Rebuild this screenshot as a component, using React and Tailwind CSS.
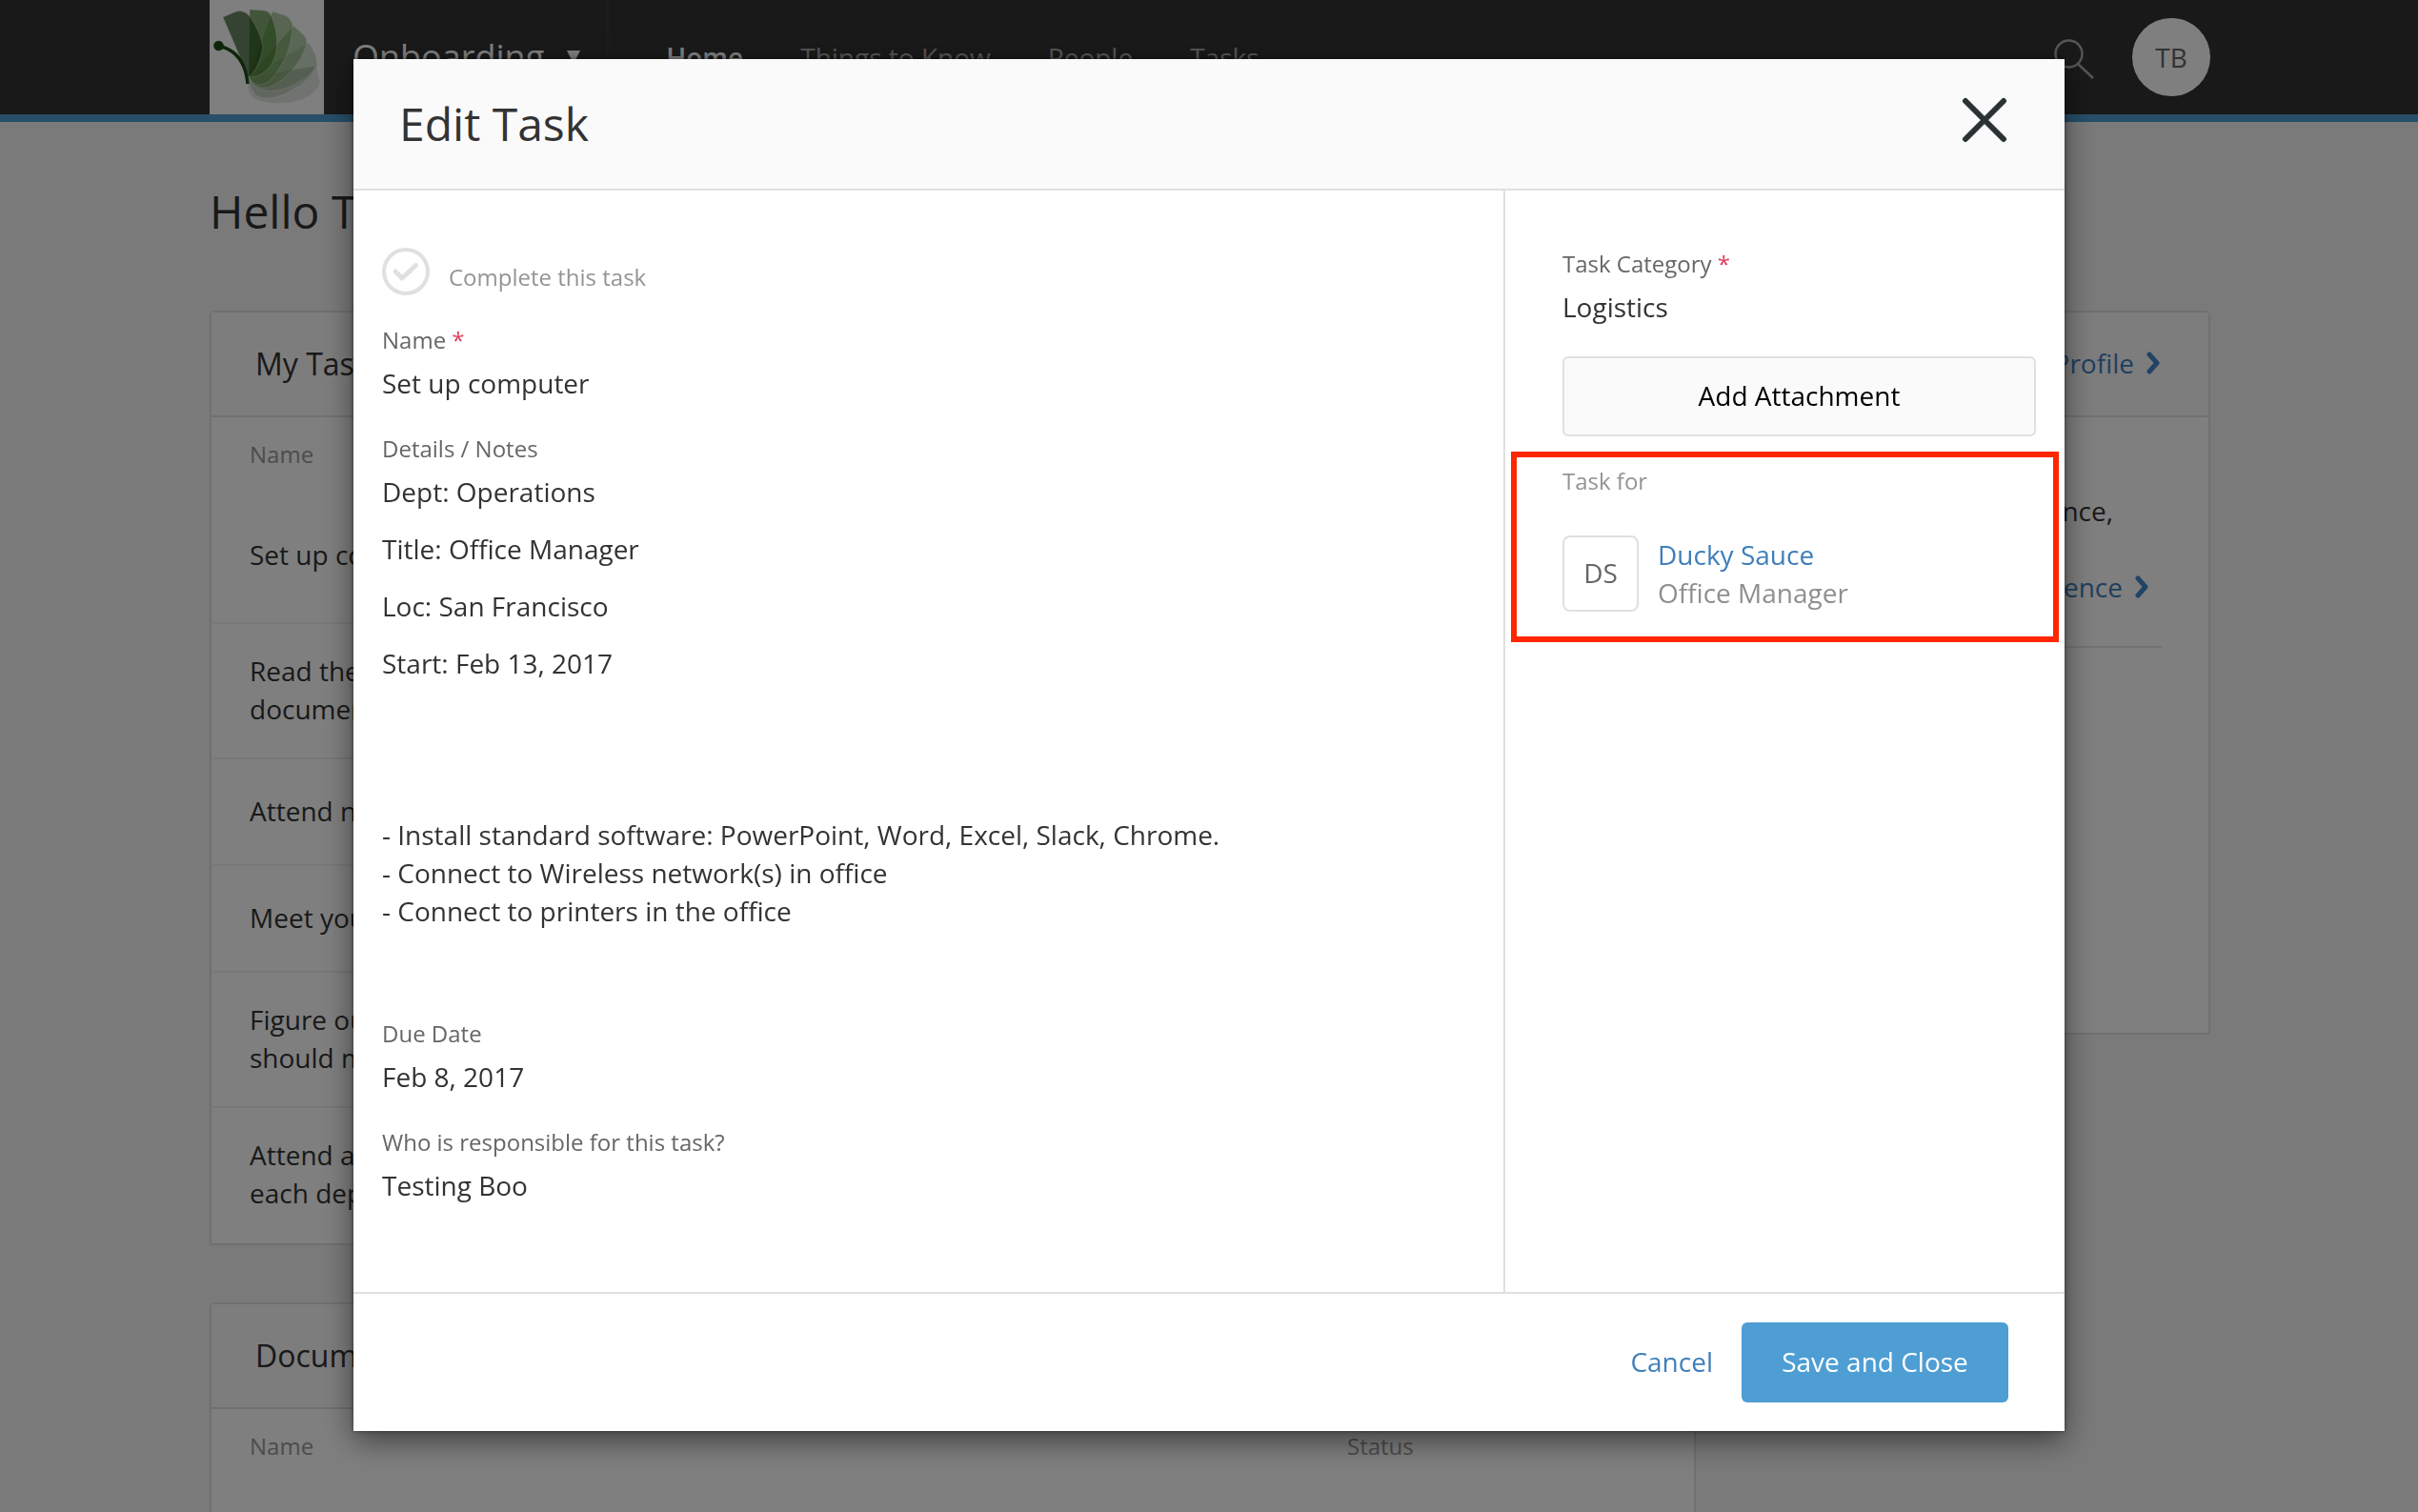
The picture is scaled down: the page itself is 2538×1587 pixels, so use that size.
import React, { useState } from "react";

const tasks = [
  { lines: ["Set up computer"], height: "h-[142px]" },
  { lines: ["Read the onboarding", "documents"], height: "h-[142px]" },
  { lines: ["Attend new hire orientation"], height: "h-28" },
  { lines: ["Meet your manager"], height: "h-28" },
  { lines: ["Figure out who you", "should meet with"], height: "h-[142px]" },
  { lines: ["Attend a meeting with", "each department"], height: "h-[142px]" },
];

const navLinks = ["Things to Know", "People", "Tasks"];

function Logo() {
  return (
    <svg viewBox="0 0 120 120" className="h-30 w-30 shrink-0 bg-white">
      <g stroke="#ffffff" strokeOpacity="0.35" strokeWidth="1">
        <path d="M41 81 Q38 97 46 103 Q66 113 96 105 Q114 97 116 86 L112 69 Z" fill="#b9c4b7" fillOpacity="0.4" />
        <path d="M41 81 L112 69 Q106 86 78 99 Q60 106 50 101 Q42 95 41 81 Z" fill="#93ad8b" fillOpacity="0.4" />
        <path d="M41 81 L104 45 Q112 55 113 68 Q105 84 76 94 Q48 100 41 81 Z" fill="#86a87a" fillOpacity="0.4" />
        <path d="M41 81 L88 27 L97 35 Q102 39 102 46 Q92 78 62 92 Q46 94 41 81 Z" fill="#6f9d5c" fillOpacity="0.5" />
        <path d="M41 81 L66 12 L81 17 Q87 22 87 27 Q86 60 64 84 Q50 96 41 81 Z" fill="#5f9648" fillOpacity="0.5" />
        <path d="M41 81 L42 10 L57 11 Q62 11 65 17 Q76 46 66 66 Q56 82 41 81 Z" fill="#417c28" fillOpacity="0.65" />
        <path d="M41 81 L14 18 L28 12 Q36 10 42 17 Q54 34 56 50 Q52 72 41 81 Z" fill="#1c4a12" fillOpacity="0.65" />
      </g>
      <circle cx="9.500" cy="48" r="5.300" fill="#204d14" />
      <path d="M9 48 Q37 54 40 88" fill="none" stroke="#204d14" strokeWidth="3.500" />
    </svg>
  );
}

function Chevron() {
  return (
    <svg viewBox="0 0 16 24" className="h-6 w-4" fill="none" stroke="#4289c7" strokeWidth="5" strokeLinecap="round" strokeLinejoin="round">
      <path d="M4 3 L12 12 L4 21" />
    </svg>
  );
}

function TopBar() {
  return (
    <header className="border-b-8 border-[#4e9ed4] bg-[#333] pl-0.5">
      <div className="mx-auto flex h-30 max-w-[2100px] items-center">
        <Logo />
        <button className="flex h-full items-center gap-6 border-x-2 border-[#3a3a3a] px-7 text-4xl text-white">
          Onboarding
          <svg viewBox="0 0 14 14" className="h-3.5 w-3.5" fill="#ffffff">
            <path d="M0 0 H14 L7 14 Z" />
          </svg>
        </button>
        <nav className="ml-15 flex gap-15">
          <a href="#" className="font-semibold text-white">Home</a>
          {navLinks.map((label) => (
            <a key={label} href="#" className="text-[#aaa]">{label}</a>
          ))}
        </nav>
        <button aria-label="Search" className="mt-1 ml-auto">
          <svg viewBox="0 0 42 42" className="h-[42px] w-[42px]" fill="none" stroke="#aaaaaa" strokeWidth="2.500">
            <circle cx="15.500" cy="15.500" r="14" />
            <path d="M25 26 L41 41" />
          </svg>
        </button>
        <button className="ml-10 h-[82px] w-[82px] rounded-full bg-white text-[#666]">TB</button>
      </div>
    </header>
  );
}

function Card({ title, children, action }) {
  return (
    <section className="rounded-t-md border-2 border-[#e0e0e0] bg-white">
      <div className="flex h-[110px] items-center justify-between border-b-2 border-[#e0e0e0] bg-[#fafafa] pr-12.5 pl-[46px]">
        <h2 className="text-[32px] font-medium">{title}</h2>
        {action}
      </div>
      {children}
    </section>
  );
}

function TableHead() {
  return (
    <thead>
      <tr className="h-[74px] text-left text-2xl/[34px] text-[#999]">
        <th className="pt-1 pl-[38px] font-medium">Name</th>
        <th className="w-[362px] pt-1 font-medium">Status</th>
      </tr>
    </thead>
  );
}

function Dashboard() {
  return (
    <main className="pl-0.5">
      <div className="mx-auto max-w-[2100px]">
        <h1 className="pt-15 text-5xl/[68px]">Hello Testing</h1>
        <div className="mt-[70px] flex items-start gap-10">
          <div className="flex flex-1 flex-col gap-15">
            <Card title="My Tasks">
              <div className="px-0.5">
                <table className="w-full">
                  <TableHead />
                  <tbody className="font-medium">
                    {tasks.map((task) => (
                      <tr key={task.lines[0]} className={`${task.height} border-b-2 border-[#eee] last:border-transparent`}>
                        <td className="pb-0.5 pl-[38px]">
                          {task.lines.map((line) => (
                            <div key={line}>{line}</div>
                          ))}
                        </td>
                        <td />
                      </tr>
                    ))}
                  </tbody>
                </table>
              </div>
            </Card>
            <Card title="Documents">
              <div className="px-0.5">
                <table className="w-full">
                  <TableHead />
                  <tbody>
                    <tr className="h-60">
                      <td className="pl-[38px]">Employee Handbook</td>
                      <td />
                    </tr>
                  </tbody>
                </table>
              </div>
            </Card>
          </div>
          <aside className="w-[500px]">
            <Card
              title="About"
              action={
                <a href="#" className="flex items-center gap-3 pb-0.5 text-[#3f7fba]">
                  Profile
                  <Chevron />
                </a>
              }
            >
              <div className="h-[646px] px-12 pt-[78px]">
                <p className="pr-13 text-right">Experience,</p>
                <div className="flex justify-end border-b-2 border-[#e6e6e6] pt-10 pr-3.5 pb-[42px]">
                  <a href="#" className="flex items-center gap-3 text-[#3f7fba]">
                    Experience
                    <Chevron />
                  </a>
                </div>
              </div>
            </Card>
          </aside>
        </div>
      </div>
    </main>
  );
}

function Field({ label, required, children }) {
  return (
    <div className="mb-8">
      <div className="mb-2 text-2xl/[34px] text-[#666]">
        {label} {required && <span className="text-[#e0395a]">*</span>}
      </div>
      {children}
    </div>
  );
}

function EditTask({ onClose }) {
  const [done, setDone] = useState(false);

  return (
    <div role="dialog" aria-labelledby="edit-task" className="w-full max-w-[1796px] bg-white shadow-[0_10px_30px_rgba(0,0,0,0.5),0_0_4px_rgba(0,0,0,0.5)]">
      <div className="flex h-[138px] items-center justify-between border-b-2 border-[#e0e0e0] bg-[#fafafa] pr-15 pl-12">
        <h2 id="edit-task" className="text-5xl">Edit Task</h2>
        <button aria-label="Close" onClick={onClose} className="mb-2">
          <svg viewBox="0 0 48 48" className="h-12 w-12" fill="none" stroke="#2b3233" strokeWidth="6" strokeLinecap="round">
            <path d="M4 4 L44 44 M44 4 L4 44" />
          </svg>
        </button>
      </div>

      <div className="flex min-h-[1156px]">
        <div className="flex-1 border-r-2 border-[#e0e0e0] px-7.5 pt-15">
          <label className="mb-7.5 flex h-[50px] items-center gap-5 text-2xl/[34px] font-medium text-[#949494]">
            <input type="checkbox" className="sr-only" checked={done} onChange={() => setDone(!done)} />
            <svg viewBox="0 0 50 50" className="h-[50px] w-[50px]" fill="none" stroke="#e0e0e0" strokeWidth="4">
              <circle cx="25" cy="25" r="23" />
              <path d="M14 25 L21 32 L35.500 18.500" strokeWidth="5" strokeLinecap="round" strokeLinejoin="round" />
            </svg>
            <span className="pt-3">Complete this task</span>
          </label>
          <Field label="Name" required>
            <p>Set up computer</p>
          </Field>
          <Field label="Details / Notes">
            <div className="flex flex-col gap-5">
              <p>Dept: Operations</p>
              <p>Title: Office Manager</p>
              <p>Loc: San Francisco</p>
              <p>Start: Feb 13, 2017</p>
              <p className="mt-30">
                - Install standard software: PowerPoint, Word, Excel, Slack, Chrome.
                <br />
                - Connect to Wireless network(s) in office
                <br />
                - Connect to printers in the office
              </p>
              <p className="h-10" />
            </div>
          </Field>
          <Field label="Due Date">
            <p>Feb 8, 2017</p>
          </Field>
          <Field label="Who is responsible for this task?">
            <p>Testing Boo</p>
          </Field>
        </div>

        <div className="w-[587px] px-1.5 pt-15">
          <div className="pr-6 pl-13.5">
            <Field label="Task Category" required>
              <p>Logistics</p>
            </Field>
            <button className="h-21 w-full rounded-md border-2 border-[#e0e0e0] bg-[#fafafa] pb-0.5 text-black">Add Attachment</button>
          </div>
          <section className="mt-4 h-50 border-6 border-[#ff2600] pt-2 pl-12">
            <h3 className="text-2xl/[34px] font-medium text-[#949494]">Task for</h3>
            <div className="mt-10 flex gap-5">
              <div className="flex h-20 w-20 items-center justify-center rounded-lg border-2 border-[#e0e0e0] pb-0.5 text-[#666]">DS</div>
              <div>
                <a href="#" className="text-[#3f7fba]">Ducky Sauce</a>
                <p className="text-[#8f8f8f]">Office Manager</p>
              </div>
            </div>
          </section>
        </div>
      </div>

      <div className="flex h-[146px] items-center justify-end gap-7.5 border-t-2 border-[#e0e0e0] pr-[59px]">
        <button className="pb-0.5 text-[#3f7fba]" onClick={onClose}>Cancel</button>
        <button className="h-21 w-70 rounded-md bg-[#4e9ed4] pb-0.5 font-medium text-white">Save and Close</button>
      </div>
    </div>
  );
}

export default function App() {
  const [open, setOpen] = useState(true);

  return (
    <div className="h-screen overflow-hidden bg-[#f5f5f5] font-['Open_Sans',sans-serif] text-[28px]/10 text-[#333]">
      <TopBar />
      <Dashboard />
      {open && (
        <div className="fixed inset-0 flex items-start justify-center overflow-hidden bg-black/50 pt-[62px]">
          <EditTask onClose={() => setOpen(false)} />
        </div>
      )}
    </div>
  );
}
